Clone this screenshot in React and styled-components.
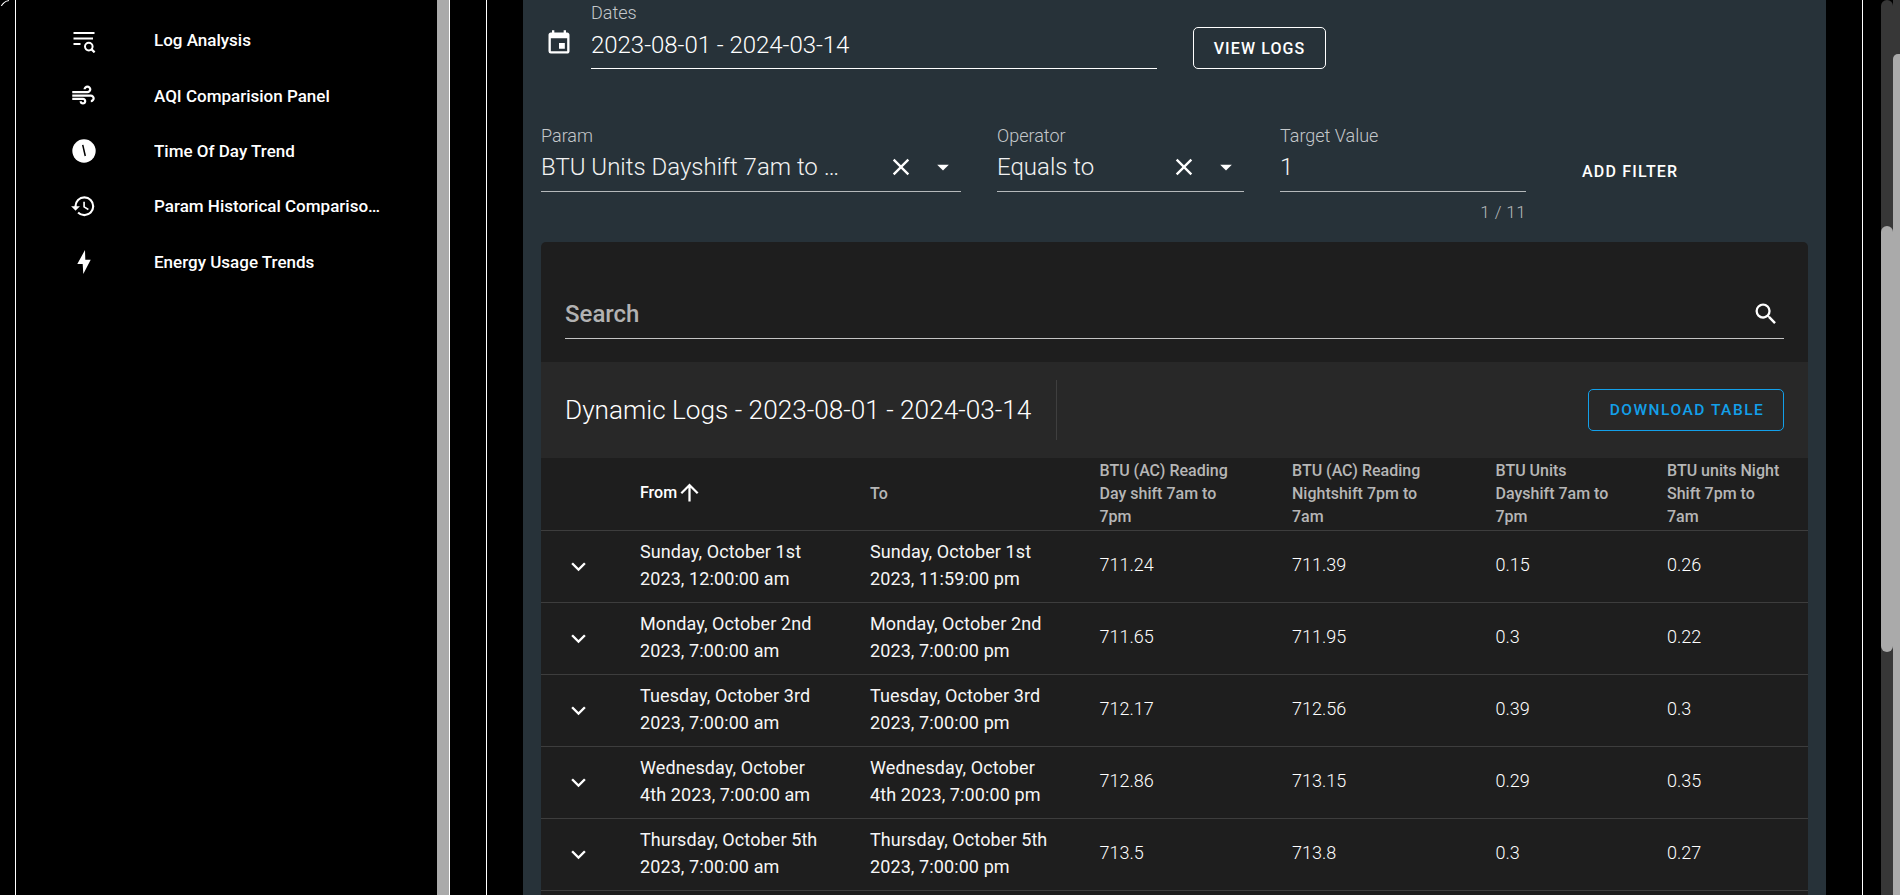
import React from 'react';
import styled, { createGlobalStyle } from 'styled-components';
import {
  MdAir, MdHistory, MdEvent, MdClear,
  MdArrowDropDown, MdSearch, MdArrowUpward, MdKeyboardArrowDown,
} from 'react-icons/md';

const Global = createGlobalStyle`
  html, body { margin: 0; height: 895px; overflow: hidden; background: #000; }
  body { font-family: Roboto, "Liberation Sans", sans-serif; color: #fff; }
  * { box-sizing: border-box; }
`;

const Screen = styled.div`display: flex; width: 1900px; height: 895px; background: #000; overflow: hidden;`;
const LeftGutter = styled.div`
  position: relative; width: 15px; flex: none;
  &::before {
    content: ''; position: absolute; left: 0; top: 0; width: 24px; height: 24px;
    border-top: 1px solid #fff; border-left: 1px solid #fff; border-top-left-radius: 10px;
    clip-path: polygon(0 0, 9px 0, 9px 6px, 0 6px);
  }
`;
const VLine = styled.div`width: 1px; flex: none; background: #fff;`;
const Sidebar = styled.nav`width: 421px; flex: none; padding-top: 12.5px; background: #000;`;
const NavItem = styled.div`display: flex; align-items: center; height: 55.4px; padding-left: 48px;`;
const NavIcon = styled.span`width: 39px; display: flex; justify-content: center; align-items: center; color: #fff;`;
const NavLabel = styled.span`
  margin-left: 51px; max-width: 227px; font-size: 17px; font-weight: 500; white-space: nowrap;
  overflow: hidden; text-overflow: ellipsis;
`;
const SideThumb = styled.div`width: 12px; flex: none; background: #aaa;`;
const Spacer = styled.div`width: ${p => p.$w}px; flex: none;`;

const Panel = styled.main`width: 1303px; flex: none; height: 895px; background: #273239; padding: 0 18px; overflow: hidden;`;
const DatesRow = styled.div`display: flex; align-items: flex-start; padding-left: 4px; height: 123px;`;
const CalendarIcon = styled.span`width: 28px; height: 28px; margin-top: 29px; display: flex; font-size: 28px; color: #fff;`;
const DatesField = styled.div`width: 566px; margin-left: 18px; display: flex; flex-direction: column;`;
const SmallLabel = styled.label`font-size: 18px; font-weight: 300; line-height: 26px; color: #c4c8cb; white-space: nowrap;`;
const DateValue = styled.div`
  height: 43px; padding-top: 2px; line-height: 34px;
  font-size: 24px; font-weight: 300; letter-spacing: -.03px; border-bottom: 1px solid #fff;
`;
const OutlineButton = styled.button`
  margin: 27px 0 0 36px; width: 133px; height: 42px; background: transparent; color: #fff;
  border: 1px solid #fff; border-radius: 5px; font: 500 16px Roboto, sans-serif; letter-spacing: 1.1px;
`;
const FilterRow = styled.div`display: flex; align-items: flex-start; gap: 36px; height: 119px;`;
const Field = styled.div`width: ${p => p.$w}px; flex: none; display: flex; flex-direction: column;`;
const Control = styled.div`
  display: flex; align-items: center; height: 43px; padding-bottom: 6px;
  border-bottom: 1px solid #b5b9bb; font-size: 24px; font-weight: 300;
`;
const ValueText = styled.span`
  flex: 1; min-width: 0; margin-right: ${p => p.$reserve || 0}px; white-space: nowrap; overflow: hidden;
  text-overflow: ellipsis; color: #f2f2f2;
`;
const ClearIcon = styled.span`display: flex; width: 40px; justify-content: center; font-size: 28px; color: #fff;`;
const ArrowIcon = styled.span`display: flex; width: 36px; margin-left: 4px; justify-content: center; font-size: 28px; color: #fff;`;
const Helper = styled.div`text-align: right; font-size: 17px; font-weight: 300; color: #b4b8ba; margin-top: 10px; letter-spacing: .4px;`;
const TextButton = styled.button`
  margin: 39px 0 0 20px; padding: 0; background: none; border: 0; color: #fff;
  font: 500 16px Roboto, sans-serif; letter-spacing: 1.2px;
`;

const Card = styled.section`width: 1267px; background: #1e1e1e; border-radius: 5px 5px 0 0;`;
const SearchWrap = styled.div`height: 120px; padding: 51px 24px 0;`;
const SearchBar = styled.div`
  display: flex; align-items: center; justify-content: space-between; height: 46px; padding-bottom: 4px;
  border-bottom: 1px solid #c4c4c4; font-size: 24px; font-weight: 500; color: #b2b2b2;
`;
const SearchGlyph = styled.span`display: flex; font-size: 28px; color: #fff; margin-right: 4px;`;
const Toolbar = styled.div`
  height: 96px; background: #282828; padding: 0 24px; display: flex; align-items: center;
`;
const Title = styled.h2`margin: 0; font-size: 26.2px; font-weight: 300; line-height: 1; white-space: nowrap; width: 466px;`;
const ToolDivider = styled.div`width: 1px; height: 60px; margin-left: 25px; background: #3f3f3f;`;
const DownloadButton = styled.button`
  margin-left: auto; width: 196px; height: 42px; padding-left: 8px; background: transparent; color: #13a0ea;
  border: 1px solid #13a0ea; border-radius: 5px; font: 500 15.5px Roboto, sans-serif; letter-spacing: 1.5px;
`;
const Table = styled.table`width: 1267px; table-layout: fixed; border-collapse: collapse;`;
const Head = styled.th`
  height: 72px; padding: 0 16px; text-align: left; vertical-align: middle; font-size: 16px; line-height: 23.2px;
  font-weight: 500; color: ${p => (p.$active ? '#fff' : '#b6b6b6')}; border-bottom: 1px solid #3d3d3d;
`;
const HeadText = styled.span`display: block; max-width: ${p => p.$max || 132}px;`;
const SortLabel = styled.span`display: flex; align-items: center; margin-top: -2px;`;
const SortArrow = styled.span`display: flex; margin-left: -1px; font-size: 27px; color: #fff;`;
const Row = styled.tr`height: 72px;`;
const DateCell = styled.td`
  padding: 0 29px 2px 16px; font-size: 18px; line-height: 27.3px; font-weight: 400; letter-spacing: .1px;
  color: #f6f6f6; border-bottom: 1px solid #3d3d3d; vertical-align: middle;
`;
const NumCell = styled.td`
  padding: 0 16px 2px; font-size: 18px; line-height: 27.3px; font-weight: 300;
  color: #fff; border-bottom: 1px solid #3d3d3d; vertical-align: middle;
`;
const Chevron = styled.td`
  padding: 0 0 0 23px; border-bottom: 1px solid #3d3d3d; vertical-align: middle; line-height: 0; font-size: 29px; color: #fff;
  svg { display: block; }
`;

const Rails = styled.div`margin-left: 18px; display: flex; flex: none;`;
const InnerRail = styled.div`width: 12px; height: 895px; background: #373737; border-radius: 6px 6px 0 0; padding-top: 226px;`;
const InnerThumb = styled.div`height: 426px; background: #aaa; border-radius: 6px;`;
const OuterRail = styled.div`width: 7px; height: 895px; background: #373737; padding-top: 54px;`;
const OuterThumb = styled.div`height: 841px; background: #aaa; border-top-left-radius: 5px;`;

const LogIcon = () => (
  <svg width="24" height="26" viewBox="0 0 24 26" fill="none" stroke="currentColor" strokeWidth="2">
    <path d="M1.5 6h21M1.5 11.5h19.5M1.5 17h7" />
    <circle cx="16.8" cy="19.6" r="3.8" />
    <path d="M19.6 22.4l3 3" strokeWidth="2.2" />
  </svg>
);
const ClockFilled = () => (
  <svg width="28" height="28" viewBox="0 0 24 24" style={{ marginTop: 1 }}>
    <circle cx="12" cy="12" r="10" fill="currentColor" />
    <path d="M10.9 6.7l2.2 9.6" stroke="#000" strokeWidth="1.3" fill="none" />
  </svg>
);
const BoltIcon = () => (
  <svg width="24" height="26" viewBox="0 0 24 26" fill="currentColor">
    <path d="M13 1L5.3 15h5.4l.6 10 7.4-14.3h-5.4z" />
  </svg>
);

const nav = [
  [<LogIcon />, 'Log Analysis'],
  [<MdAir size={27} />, 'AQI Comparision Panel'],
  [<ClockFilled />, 'Time Of Day Trend'],
  [<MdHistory size={26.5} />, 'Param Historical Comparison Panel'],
  [<BoltIcon />, 'Energy Usage Trends'],
];

const rows = [
  ['Sunday, October 1st 2023, 12:00:00 am', 'Sunday, October 1st 2023, 11:59:00 pm', '711.24', '711.39', '0.15', '0.26'],
  ['Monday, October 2nd 2023, 7:00:00 am', 'Monday, October 2nd 2023, 7:00:00 pm', '711.65', '711.95', '0.3', '0.22'],
  ['Tuesday, October 3rd 2023, 7:00:00 am', 'Tuesday, October 3rd 2023, 7:00:00 pm', '712.17', '712.56', '0.39', '0.3'],
  ['Wednesday, October 4th 2023, 7:00:00 am', 'Wednesday, October 4th 2023, 7:00:00 pm', '712.86', '713.15', '0.29', '0.35'],
  ['Thursday, October 5th 2023, 7:00:00 am', 'Thursday, October 5th 2023, 7:00:00 pm', '713.5', '713.8', '0.3', '0.27'],
];

const widths = [83, 230, 229.5, 192.5, 203.5, 171.5, 157];

export default function App() {
  return (
    <Screen>
      <Global />
      <LeftGutter />
      <VLine />
      <Sidebar>
        {nav.map(([icon, label]) => (
          <NavItem key={label}>
            <NavIcon>{icon}</NavIcon>
            <NavLabel>{label}</NavLabel>
          </NavItem>
        ))}
      </Sidebar>
      <SideThumb />
      <VLine />
      <Spacer $w={36} />
      <VLine />
      <Spacer $w={36} />
      <Panel>
        <DatesRow>
          <CalendarIcon><MdEvent /></CalendarIcon>
          <DatesField>
            <SmallLabel>Dates</SmallLabel>
            <DateValue>2023-08-01 - 2024-03-14</DateValue>
          </DatesField>
          <OutlineButton>VIEW LOGS</OutlineButton>
        </DatesRow>
        <FilterRow>
          <Field $w={420}>
            <SmallLabel>Param</SmallLabel>
            <Control>
              <ValueText $reserve={36}>BTU Units Dayshift 7am to 7pm</ValueText>
              <ClearIcon><MdClear /></ClearIcon>
              <ArrowIcon><MdArrowDropDown /></ArrowIcon>
            </Control>
          </Field>
          <Field $w={247}>
            <SmallLabel>Operator</SmallLabel>
            <Control>
              <ValueText>Equals to</ValueText>
              <ClearIcon><MdClear /></ClearIcon>
              <ArrowIcon><MdArrowDropDown /></ArrowIcon>
            </Control>
          </Field>
          <Field $w={246}>
            <SmallLabel>Target Value</SmallLabel>
            <Control><ValueText>1</ValueText></Control>
            <Helper>1 / 11</Helper>
          </Field>
          <TextButton>ADD FILTER</TextButton>
        </FilterRow>
        <Card>
          <SearchWrap>
            <SearchBar>
              <span>Search</span>
              <SearchGlyph><MdSearch /></SearchGlyph>
            </SearchBar>
          </SearchWrap>
          <Toolbar>
            <Title>Dynamic Logs - 2023-08-01 - 2024-03-14</Title>
            <ToolDivider />
            <DownloadButton>DOWNLOAD TABLE</DownloadButton>
          </Toolbar>
          <Table>
            <colgroup>
              {widths.map((w, i) => <col key={i} style={{ width: w }} />)}
            </colgroup>
            <thead>
              <tr>
                <Head />
                <Head $active><SortLabel>From<SortArrow><MdArrowUpward /></SortArrow></SortLabel></Head>
                <Head>To</Head>
                <Head><HeadText>BTU (AC) Reading Day shift 7am to 7pm</HeadText></Head>
                <Head><HeadText>BTU (AC) Reading Nightshift 7pm to 7am</HeadText></Head>
                <Head><HeadText>BTU Units Dayshift 7am to 7pm</HeadText></Head>
                <Head><HeadText $max={116}>BTU units Night Shift 7pm to 7am</HeadText></Head>
              </tr>
            </thead>
            <tbody>
              {rows.map((r) => (
                <Row key={r[0]}>
                  <Chevron><MdKeyboardArrowDown /></Chevron>
                  <DateCell>{r[0]}</DateCell>
                  <DateCell>{r[1]}</DateCell>
                  <NumCell>{r[2]}</NumCell>
                  <NumCell>{r[3]}</NumCell>
                  <NumCell>{r[4]}</NumCell>
                  <NumCell>{r[5]}</NumCell>
                </Row>
              ))}
              <Row>
                <Chevron />
                <DateCell /><DateCell /><NumCell /><NumCell /><NumCell /><NumCell />
              </Row>
            </tbody>
          </Table>
        </Card>
      </Panel>
      <Spacer $w={36} />
      <VLine />
      <Rails>
        <InnerRail><InnerThumb /></InnerRail>
        <OuterRail><OuterThumb /></OuterRail>
      </Rails>
    </Screen>
  );
}
